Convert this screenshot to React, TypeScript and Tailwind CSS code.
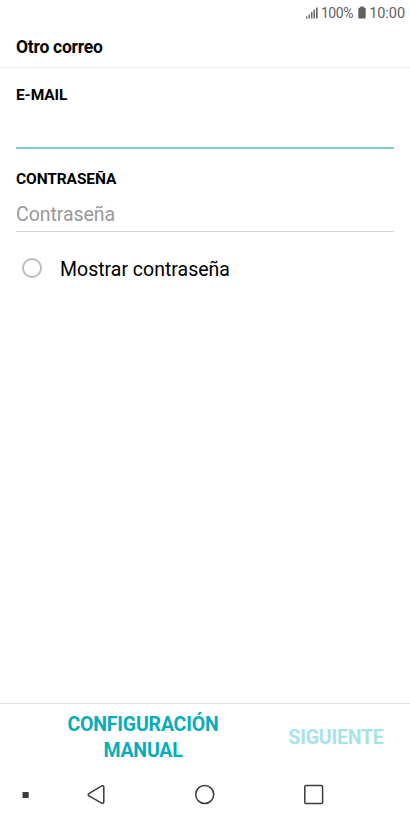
const navIconProps = {
  fill: 'none',
  stroke: '#3c3c3c',
  strokeWidth: 1.5,
  strokeLinejoin: 'round' as const,
};

function StatusBar() {
  return (
    <div className="flex h-[25px] items-center justify-end pr-[5px] text-[14.5px] leading-[25px] text-[#616161]">
      <svg width="12" height="12" viewBox="0 0 12 12" className="mr-[3px]" fill="#6b6b6b">
        <rect x="0" y="9.5" width="1.5" height="2" />
        <rect x="2.5" y="7.5" width="1.5" height="4" />
        <rect x="5" y="5" width="1.5" height="6.5" />
        <rect x="7.5" y="2.5" width="1.5" height="9" />
        <rect x="10" y="0.5" width="1.7" height="11" />
      </svg>
      <span className="pt-[2px] text-[14px] tracking-[-0.4px]">100%</span>
      <svg width="8" height="13" viewBox="0 0 8 13" className="mr-[3px] ml-[5px]" fill="#616161">
        <path d="M2.2 0.5h3.6v1.3h1.2a.7.7 0 0 1 .7.7v9.3a.7.7 0 0 1-.7.7H1a.7.7 0 0 1-.7-.7V2.5a.7.7 0 0 1 .7-.7h1.2z" />
      </svg>
      <span className="pt-[2px] tracking-[-0.05px]">10:00</span>
    </div>
  );
}

function NavBar() {
  return (
    <nav className="flex h-[50px] items-center">
      <svg width="410" height="50" viewBox="0 0 410 50" {...navIconProps}>
        <rect x="22.5" y="22" width="6.2" height="6" rx="0.5" fill="#3c3c3c" stroke="none" />
        <path d="M88.9 23.6 101.7 15.9Q103.8 15 103.8 17.2V31.8Q103.8 34 101.7 33.1L88.9 25.8Q87.5 24.7 88.9 23.6Z" />
        <circle cx="204.7" cy="24.5" r="9" />
        <rect x="304.8" y="15.5" width="17.8" height="18" rx="1.3" />
      </svg>
    </nav>
  );
}

export default function App() {
  return (
    <div className="flex h-[820px] w-[410px] flex-col bg-white font-['Roboto',sans-serif] text-black">
      <StatusBar />
      <header className="flex h-[43px] items-center border-b border-[#eeeeee] px-4">
        <h1 className="pt-px text-[17.5px] leading-6 font-bold tracking-[-0.25px]">Otro correo</h1>
      </header>

      <main className="flex flex-1 flex-col px-4">
        <label className="mt-[17px] text-[15.5px] leading-5 font-bold tracking-[-0.1px]">E-MAIL</label>
        <div className="h-[44px] border-b-2 border-[#7accd0]" />
        <label className="mt-[20px] text-[15.5px] leading-5 font-bold tracking-[-0.1px]">CONTRASEÑA</label>
        <div className="h-[43px] border-b border-[#d4d4d4] pt-[14px] text-[19.5px] leading-6 tracking-[-0.05px] text-[#999999]">
          Contraseña
        </div>
        <div className="mt-[24px] flex h-6 items-center">
          <span className="ml-[6px] size-5 rounded-full border-2 border-[#bdbdbd]" />
          <span className="mt-[3px] ml-[18px] text-[19.5px] leading-6">Mostrar contraseña</span>
        </div>
      </main>

      <footer className="flex h-[67px] items-center border-t border-[#e2e2e2] pt-[2px] text-center text-[19.5px] leading-[26px] font-bold tracking-[-0.2px] text-[#08adb9]">
        <button className="ml-[43px] w-[200px]">
          CONFIGURACIÓN
          <br />
          MANUAL
        </button>
        <button className="ml-[33px] w-[120px] text-[#a8e3e7]">SIGUIENTE</button>
      </footer>
      <NavBar />
    </div>
  );
}
